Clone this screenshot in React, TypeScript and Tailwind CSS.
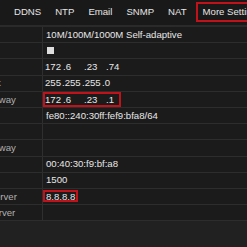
import React from "react";

type Row = {
  label: string;
  value?: React.ReactNode;
};

const tabs = ["DDNS", "NTP", "Email", "SNMP", "NAT"];

const IpField = ({
  parts,
  widths,
  active = false,
}: {
  parts: string[];
  widths: string[];
  active?: boolean;
}) => {
  return (
    <div
      className={`flex h-[15px] items-center border-2 ${
        active ? "border-[#c1121c]" : "border-transparent"
      }`}
    >
      {parts.map((part, i) => (
        <span key={i} className={`${widths[i]} whitespace-nowrap`}>
          {part}
        </span>
      ))}
    </div>
  );
};

const rows: Row[] = [
  {
    label: "NIC Type",
    value: <span className="pl-[3px]">10M/100M/1000M Self-adaptive</span>,
  },
  {
    label: "Enable DHCP",
    value: <div className="ml-[4px] h-[7px] w-[7px] bg-[#dedede]" />,
  },
  {
    label: "IPv4 Address",
    value: (
      <IpField
        parts={["172", ".6", ".23", ".74"]}
        widths={["w-[18px]", "w-[21px]", "w-[22px]", "w-[14px]"]}
      />
    ),
  },
  {
    label: "IPv4 Subnet Mask",
    value: (
      <IpField
        parts={["255", ".255", ".255", ".0"]}
        widths={["w-[17px]", "w-[20px]", "w-[20px]", "w-[14px]"]}
      />
    ),
  },
  {
    label: "IPv4 Default Gateway",
    value: (
      <IpField
        parts={["172", ".6", ".23", ".1"]}
        widths={["w-[18px]", "w-[21px]", "w-[22px]", "w-[13px]"]}
        active
      />
    ),
  },
  {
    label: "IPv6 Address 1",
    value: <span className="pl-[3px]">fe80::240:30ff:fef9:bfa8/64</span>,
  },
  { label: "IPv6 Address 2" },
  { label: "IPv6 Default Gateway" },
  {
    label: "MAC Address",
    value: <span className="pl-[3px]">00:40:30:f9:bf:a8</span>,
  },
  { label: "MTU(Bytes)", value: <span className="pl-[3px]">1500</span> },
  {
    label: "Preferred DNS Server",
    value: (
      <div className="flex h-[12px] items-center border-2 border-[#c1121c] px-[1px]">
        8.8.8.8
      </div>
    ),
  },
  { label: "Alternate DNS Server" },
];

export default function App() {
  return (
    <div className="h-[247px] w-[247px] overflow-hidden bg-[#212121] font-['Liberation_Sans',Arial,sans-serif] text-[9.6px] leading-none">
      <div className="flex h-[27px] items-start border-b-2 border-[#2a2a2a] bg-[#191919] pl-[7px] pt-[2px] text-[#e6e6e6]">
        {tabs.map((tab) => (
          <div key={tab} className="flex h-[20px] items-center px-[7px]">
            {tab}
          </div>
        ))}
        <div className="ml-[2px] flex h-[20px] items-center whitespace-nowrap border-2 border-[#c1121c] px-[5px]">
          More Settings
        </div>
      </div>
      <div className="ml-[-77px] w-[324px]">
        {rows.map((row) => (
          <div
            key={row.label}
            className="flex h-[16.2px] border-b border-[#2d2d2d] bg-[#1b1b1b]"
          >
            <div className="flex w-[120px] shrink-0 items-center whitespace-nowrap border-r border-[#2f2f2f] text-[#b0b0b0]">
              {row.label}
            </div>
            <div className="flex flex-1 items-center whitespace-nowrap text-[#e8e8e8]">
              {row.value}
            </div>
          </div>
        ))}
      </div>
    </div>
  );
}
